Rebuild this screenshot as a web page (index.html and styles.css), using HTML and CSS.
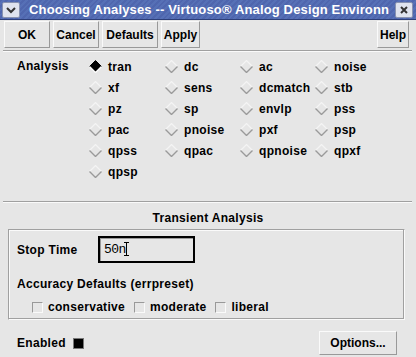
FILE: index.html
```html
<!DOCTYPE html>
<html lang="en">
<head>
  <meta charset="UTF-8">
  <title>Choosing Analyses</title>
  <link rel="stylesheet" href="styles.css">
</head>
<body>
  <div class="window">
    <div class="titlebar">
      <span class="tb-btn">
        <svg width="10" height="8" viewBox="0 0 10 8"><path d="M1 2 L5 6 L9 2" fill="none" stroke="#333" stroke-width="2"/></svg>
      </span>
      <span class="title">Choosing Analyses -- Virtuoso® Analog Design Environn</span>
      <span class="tb-btn close">
        <svg width="8" height="8" viewBox="0 0 8 8"><path d="M1 1 L7 7 M7 1 L1 7" stroke="#333" stroke-width="2"/></svg>
      </span>
    </div>

    <div class="toolbar">
      <button class="btn btn-ok">OK</button>
      <button class="btn btn-cancel">Cancel</button>
      <button class="btn btn-defaults">Defaults</button>
      <button class="btn btn-apply">Apply</button>
      <span class="spacer"></span>
      <button class="btn btn-help">Help</button>
    </div>
    <div class="sep"></div>

    <div class="analysis">
      <div class="label">Analysis</div>
      <div class="grid">
        <div class="radio on"><svg viewBox="0 0 13 13"><path class="fill" d="M6.5 0.5 L12.5 6.5 L6.5 12.5 L0.5 6.5 Z"/><path class="lo" d="M12.5 6.5 L6.5 12.5 L0.5 6.5"/></svg>tran</div>
        <div class="radio"><svg viewBox="0 0 13 13"><path class="hi" d="M0.5 6.5 L6.5 0.5 L12.5 6.5"/><path class="lo" d="M12.5 6.5 L6.5 12.5 L0.5 6.5"/></svg>dc</div>
        <div class="radio"><svg viewBox="0 0 13 13"><path class="hi" d="M0.5 6.5 L6.5 0.5 L12.5 6.5"/><path class="lo" d="M12.5 6.5 L6.5 12.5 L0.5 6.5"/></svg>ac</div>
        <div class="radio"><svg viewBox="0 0 13 13"><path class="hi" d="M0.5 6.5 L6.5 0.5 L12.5 6.5"/><path class="lo" d="M12.5 6.5 L6.5 12.5 L0.5 6.5"/></svg>noise</div>
        <div class="radio"><svg viewBox="0 0 13 13"><path class="hi" d="M0.5 6.5 L6.5 0.5 L12.5 6.5"/><path class="lo" d="M12.5 6.5 L6.5 12.5 L0.5 6.5"/></svg>xf</div>
        <div class="radio"><svg viewBox="0 0 13 13"><path class="hi" d="M0.5 6.5 L6.5 0.5 L12.5 6.5"/><path class="lo" d="M12.5 6.5 L6.5 12.5 L0.5 6.5"/></svg>sens</div>
        <div class="radio"><svg viewBox="0 0 13 13"><path class="hi" d="M0.5 6.5 L6.5 0.5 L12.5 6.5"/><path class="lo" d="M12.5 6.5 L6.5 12.5 L0.5 6.5"/></svg>dcmatch</div>
        <div class="radio"><svg viewBox="0 0 13 13"><path class="hi" d="M0.5 6.5 L6.5 0.5 L12.5 6.5"/><path class="lo" d="M12.5 6.5 L6.5 12.5 L0.5 6.5"/></svg>stb</div>
        <div class="radio"><svg viewBox="0 0 13 13"><path class="hi" d="M0.5 6.5 L6.5 0.5 L12.5 6.5"/><path class="lo" d="M12.5 6.5 L6.5 12.5 L0.5 6.5"/></svg>pz</div>
        <div class="radio"><svg viewBox="0 0 13 13"><path class="hi" d="M0.5 6.5 L6.5 0.5 L12.5 6.5"/><path class="lo" d="M12.5 6.5 L6.5 12.5 L0.5 6.5"/></svg>sp</div>
        <div class="radio"><svg viewBox="0 0 13 13"><path class="hi" d="M0.5 6.5 L6.5 0.5 L12.5 6.5"/><path class="lo" d="M12.5 6.5 L6.5 12.5 L0.5 6.5"/></svg>envlp</div>
        <div class="radio"><svg viewBox="0 0 13 13"><path class="hi" d="M0.5 6.5 L6.5 0.5 L12.5 6.5"/><path class="lo" d="M12.5 6.5 L6.5 12.5 L0.5 6.5"/></svg>pss</div>
        <div class="radio"><svg viewBox="0 0 13 13"><path class="hi" d="M0.5 6.5 L6.5 0.5 L12.5 6.5"/><path class="lo" d="M12.5 6.5 L6.5 12.5 L0.5 6.5"/></svg>pac</div>
        <div class="radio"><svg viewBox="0 0 13 13"><path class="hi" d="M0.5 6.5 L6.5 0.5 L12.5 6.5"/><path class="lo" d="M12.5 6.5 L6.5 12.5 L0.5 6.5"/></svg>pnoise</div>
        <div class="radio"><svg viewBox="0 0 13 13"><path class="hi" d="M0.5 6.5 L6.5 0.5 L12.5 6.5"/><path class="lo" d="M12.5 6.5 L6.5 12.5 L0.5 6.5"/></svg>pxf</div>
        <div class="radio"><svg viewBox="0 0 13 13"><path class="hi" d="M0.5 6.5 L6.5 0.5 L12.5 6.5"/><path class="lo" d="M12.5 6.5 L6.5 12.5 L0.5 6.5"/></svg>psp</div>
        <div class="radio"><svg viewBox="0 0 13 13"><path class="hi" d="M0.5 6.5 L6.5 0.5 L12.5 6.5"/><path class="lo" d="M12.5 6.5 L6.5 12.5 L0.5 6.5"/></svg>qpss</div>
        <div class="radio"><svg viewBox="0 0 13 13"><path class="hi" d="M0.5 6.5 L6.5 0.5 L12.5 6.5"/><path class="lo" d="M12.5 6.5 L6.5 12.5 L0.5 6.5"/></svg>qpac</div>
        <div class="radio"><svg viewBox="0 0 13 13"><path class="hi" d="M0.5 6.5 L6.5 0.5 L12.5 6.5"/><path class="lo" d="M12.5 6.5 L6.5 12.5 L0.5 6.5"/></svg>qpnoise</div>
        <div class="radio"><svg viewBox="0 0 13 13"><path class="hi" d="M0.5 6.5 L6.5 0.5 L12.5 6.5"/><path class="lo" d="M12.5 6.5 L6.5 12.5 L0.5 6.5"/></svg>qpxf</div>
        <div class="radio"><svg viewBox="0 0 13 13"><path class="hi" d="M0.5 6.5 L6.5 0.5 L12.5 6.5"/><path class="lo" d="M12.5 6.5 L6.5 12.5 L0.5 6.5"/></svg>qpsp</div>
      </div>
    </div>
    <div class="sep"></div>

    <div class="section-title">Transient Analysis</div>
    <div class="frame">
      <div class="row">
        <span class="label">Stop Time</span>
        <span class="field">50n<span class="ibeam"></span></span>
      </div>
      <div class="acc-label">Accuracy Defaults (errpreset)</div>
      <div class="checks">
        <span class="check"><i></i>conservative</span>
        <span class="check"><i></i>moderate</span>
        <span class="check"><i></i>liberal</span>
      </div>
    </div>

    <div class="footer">
      <span class="enabled">Enabled <i></i></span>
      <button class="btn btn-options">Options...</button>
    </div>
  </div>
</body>
</html>
```

FILE: styles.css
```css
* {
  box-sizing: border-box;
}

html, body {
  margin: 0;
  background: #e6e6e6;
}

body {
  width: 416px;
  height: 357px;
  overflow: hidden;
  font-family: "Liberation Sans", Arial, sans-serif;
  font-size: 12px;
  font-weight: bold;
  letter-spacing: 0.3px;
  color: #000;
}

.window {
  width: 416px;
  height: 357px;
}

.titlebar {
  height: 20px;
  display: flex;
  align-items: center;
  background: repeating-linear-gradient(135deg, #4f66ae 0 2px, #5670b6 2px 4px);
  border-bottom: 1px solid #2e3f78;
  padding: 0 2px;
  overflow: hidden;
}

.tb-btn {
  flex: none;
  width: 18px;
  height: 16px;
  background: #dfe3ee;
  border: 1px solid #8892b0;
  border-radius: 2px;
  display: flex;
  align-items: center;
  justify-content: center;
}

.tb-btn.close {
  margin-left: auto;
  margin-right: 1px;
}

.title {
  color: #fff;
  font-size: 13px;
  letter-spacing: 0.15px;
  margin-left: 9px;
  white-space: nowrap;
}

.toolbar {
  display: flex;
  gap: 3px;
  padding: 1px 7px 0 4px;
  height: 28px;
  align-items: flex-end;
}

.btn {
  font: inherit;
  letter-spacing: 0;
  color: #000;
  background: #e6e6e6;
  border: 1px solid;
  border-color: #fafafa #999 #999 #fafafa;
  height: 27px;
  padding: 0;
  cursor: pointer;
}

.btn-ok,
.btn-cancel {
  width: 46px;
}

.btn-defaults {
  width: 56px;
}

.btn-apply {
  width: 39px;
}

.btn-help {
  width: 32px;
}

.spacer {
  flex: 1;
}

.sep {
  height: 2px;
  margin: 2px 4px 0 3px;
  border-top: 1px solid #a0a0a0;
  border-bottom: 1px solid #fafafa;
}

.analysis {
  display: flex;
  padding: 4px 0 0 17px;
  height: 147px;
}

.analysis .label {
  width: 72px;
  line-height: 21px;
}

.grid {
  display: grid;
  grid-template-columns: 76px 75px 75px 75px;
  grid-auto-rows: 21px;
}

.radio {
  display: flex;
  align-items: center;
  gap: 6px;
}

.radio svg {
  width: 13px;
  height: 13px;
  margin-bottom: 1px;
}

.radio .hi {
  fill: none;
  stroke: #f4f4f4;
  stroke-width: 1.2;
}

.radio .lo {
  fill: none;
  stroke: #9a9a9a;
  stroke-width: 1.4;
}

.radio .fill {
  fill: #000;
  stroke: #000;
}

.radio.on .lo {
  stroke: #fafafa;
}

.section-title {
  text-align: center;
  margin-top: 8px;
  height: 18px;
}

.frame {
  margin: 0 11px 0 8px;
  height: 91px;
  border: 1px solid;
  border-color: #a0a0a0 #fafafa #fafafa #a0a0a0;
  box-shadow: inset -1px -1px 0 #a0a0a0, inset 1px 1px 0 #fafafa;
  padding: 6px 8px 5px;
}

.row {
  display: flex;
  align-items: center;
}

.row .label {
  width: 81px;
}

.field {
  width: 97px;
  height: 27px;
  border: 2px solid #000;
  box-shadow: inset 1px 1px 0 #999;
  font: normal 13px "Liberation Mono", "DejaVu Sans Mono", monospace;
  letter-spacing: -0.5px;
  padding: 4px 0 0 4px;
  display: flex;
  align-items: flex-start;
}

.ibeam {
  width: 5px;
  height: 14px;
  margin-left: -2px;
  border-top: 1px solid #000;
  border-bottom: 1px solid #000;
  background: linear-gradient(#000, #000) center / 1px 100% no-repeat;
}

.acc-label {
  margin-top: 14px;
}

.checks {
  display: flex;
  gap: 9px;
  margin: 9px 0 0 15px;
}

.check {
  display: flex;
  align-items: center;
  gap: 5px;
}

.check i {
  width: 11px;
  height: 11px;
  border: 1px solid;
  border-color: #999 #fafafa #fafafa #999;
}

.footer {
  display: flex;
  align-items: center;
  justify-content: space-between;
  padding: 0 19px 0 17px;
  margin-top: 11px;
}

.enabled {
  display: flex;
  align-items: center;
  gap: 7px;
}

.enabled i {
  width: 11px;
  height: 11px;
  background: #000;
  border: 1px solid #777;
}

.btn-options {
  width: 78px;
  height: 24px;
}
```
